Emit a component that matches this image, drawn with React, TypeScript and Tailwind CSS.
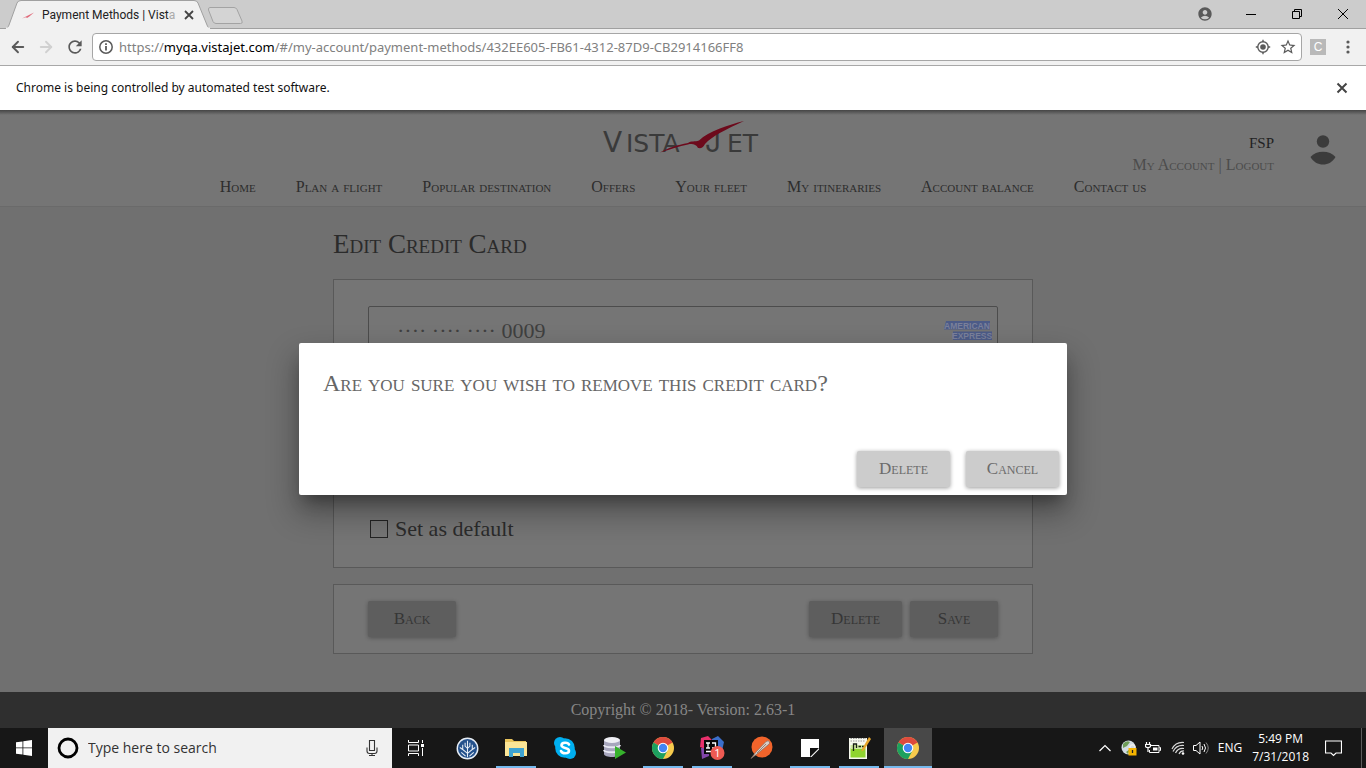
import type { ReactNode } from 'react';
import { ArrowLeft, ArrowRight } from 'lucide-react';
import { MdAccountCircle, MdRefresh, MdStarBorder } from 'react-icons/md';

const navItems = ['Home', 'Plan a flight', 'Popular destination', 'Offers', 'Your fleet', 'My itineraries', 'Account balance', 'Contact us'];

function Swoosh() {
  return (
    <svg viewBox="0 0 16 16" className="h-4 w-4" aria-hidden="true">
      <path d="M2 11.500 L6 9.500 L14 5.500 L9 9.800 L7 11 L6 10.300 Z" fill="#e06a7a" />
    </svg>
  );
}

function TabStrip() {
  return (
    <div className="flex h-[29px] items-start justify-between border-b border-[#a0a0a0] bg-[#cccccc]">
      <div className="flex">
        <div className="relative ml-[5px] h-[29px] w-[206px]">
          <svg viewBox="0 0 206 29" className="absolute inset-0 h-full w-full" aria-hidden="true">
            <path d="M0 29 C3 28 3 27 4 25 L12 3 Q13 .5 16 .5 H189 Q192 .5 193 3 L202 25 C203 28 204 28 206 29 Z" fill="#f1f1f1" stroke="#a0a0a0" />
            <path d="M1 28.500 H205" stroke="#f1f1f1" strokeWidth="2" />
          </svg>
          <div className="relative flex h-full items-center pl-[15px]">
            <Swoosh />
            <span className="ml-1.5 w-[141px] font-['Roboto','Open_Sans',sans-serif] text-[12px] leading-5 whitespace-nowrap text-[#222]">
              Payment Methods | Vist<span className="text-[#aaa]">a</span>
            </span>
            <button type="button" aria-label="Close tab" className="h-3 w-3">
              <svg viewBox="0 0 12 12" className="h-3 w-3"><path d="M2 2 L10 10 M10 2 L2 10" stroke="#444" strokeWidth="1.800" /></svg>
            </button>
          </div>
        </div>
        <button type="button" aria-label="New tab" className="-ml-1 mt-[7px] h-[18px] w-9">
          <svg viewBox="0 0 36 18" className="h-full w-full"><path d="M3 .5 H27 Q29 .5 30 2.500 L35 14 Q36 16.500 33.500 16.500 H9 Q7 16.500 6 14.500 L1.500 3 Q1 .5 3 .5Z" fill="#d4d4d4" stroke="#a3a3a3" /></svg>
        </button>
      </div>
      <div className="flex h-[27px] items-center">
        <button type="button" aria-label="Profile" className="grid w-[46px] place-items-center text-[#5a5a5a]"><MdAccountCircle size={16} /></button>
        <button type="button" aria-label="Minimize" className="grid w-[46px] place-items-center"><svg viewBox="0 0 10 10" className="h-2.5 w-2.5"><path d="M0 5.500 H10" stroke="#000" /></svg></button>
        <button type="button" aria-label="Restore" className="grid w-[46px] place-items-center"><svg viewBox="0 0 10 10" className="h-2.5 w-2.5"><path d="M.5 2.500 H7.500 V9.500 H.5Z M2.500 2.500 V.5 H9.500 V7.500 H7.500" fill="none" stroke="#000" /></svg></button>
        <button type="button" aria-label="Close" className="grid w-[46px] place-items-center"><svg viewBox="0 0 10 10" className="h-2.5 w-2.5"><path d="M0 0 L10 10 M10 0 L0 10" stroke="#000" /></svg></button>
      </div>
    </div>
  );
}

function Toolbar() {
  return (
    <div className="flex h-[37px] items-center border-b border-[#a8a8a8] bg-[#f1f1f1] pr-2.5 pl-[9px] text-[#5a5a5a]">
      <button type="button" aria-label="Back" className="w-7"><ArrowLeft size={18} strokeWidth={2.5} /></button>
      <button type="button" aria-label="Forward" className="w-7 text-[#d0d0d0]"><ArrowRight size={18} strokeWidth={2.5} /></button>
      <button type="button" aria-label="Reload" className="w-[27px]"><MdRefresh size={20} /></button>
      <div className="flex h-7 flex-1 items-center rounded-sm border border-[#a6a6a6] bg-white pr-1 pl-1.5">
        <svg viewBox="0 0 14 14" className="h-3.5 w-3.5" aria-hidden="true"><circle cx="7" cy="7" r="6.200" fill="none" stroke="#5a5a5a" strokeWidth="1.500" /><path d="M7 6 V10.500 M7 3.200 V5" stroke="#5a5a5a" strokeWidth="1.800" /></svg>
        <p className="ml-1.5 flex-1 font-['Noto_Sans','Open_Sans',sans-serif] text-[13px] leading-5 whitespace-nowrap text-[#808080]">
          https://<span className="text-black">myqa.vistajet.com</span>/#/my-account/payment-methods/432EE605-FB61-4312-87D9-CB2914166FF8
        </p>
        <button type="button" aria-label="Location" className="mr-2">
          <svg viewBox="0 0 16 16" className="h-4 w-4"><circle cx="8" cy="8" r="5.200" fill="none" stroke="#5a5a5a" strokeWidth="1.400" /><circle cx="8" cy="8" r="2.800" fill="#5a5a5a" /><path d="M8 .8 V3 M8 13 V15.200 M.8 8 H3 M13 8 H15.200" stroke="#5a5a5a" strokeWidth="1.400" /></svg>
        </button>
        <button type="button" aria-label="Bookmark"><MdStarBorder size={18} /></button>
      </div>
      <button type="button" className="ml-2 grid h-4 w-4 place-items-center bg-[#b9b9b9] font-['Liberation_Sans',sans-serif] text-[12px] leading-4 text-white">C</button>
      <button type="button" aria-label="Menu" className="ml-3.5 w-4">
        <svg viewBox="0 0 16 16" className="h-4 w-4"><g fill="#5a5a5a"><circle cx="8" cy="3" r="1.600" /><circle cx="8" cy="8" r="1.600" /><circle cx="8" cy="13" r="1.600" /></g></svg>
      </button>
    </div>
  );
}

function Logo() {
  return (
    <svg viewBox="0 0 164 44" role="img" aria-label="VistaJet" className="h-11 w-[164px]">
      <g fill="#3a3a3a" fontFamily="DejaVu Sans, sans-serif">
        <text x="2" y="32" fontSize="28">V</text>
        <text x="25" y="32" fontSize="25">ISTA</text>
        <text x="104" y="32" fontSize="28" fontFamily="Inter, sans-serif">J</text>
        <text x="126" y="32" fontSize="25">ET</text>
      </g>
      <path d="M59 32.500 C68 27.500 76 25 87 23 C90 20.500 94 22 98 20.500 C108 11 127 5 143 1 C126 9 111 16 104 24 C102 28 100 28.500 97 28 C95 24 91 23.500 87 24.500 C78 26 69 29.500 59 32.500Z" fill="#6d0a1c" />
    </svg>
  );
}

function SiteHeader() {
  return (
    <header className="border-b border-[#6a6a6a] bg-[#757575] bg-[linear-gradient(#454545,#757575_5px)] [font-variant:small-caps]">
      <div className="grid h-[66px] grid-cols-[1fr_auto_1fr]">
        <span />
        <a href="#home" className="mt-[10px] h-11"><Logo /></a>
        <div className="flex justify-end pt-[22px] pr-[30px]">
          <div className="text-right text-[16px] leading-[22px] text-[#4c4c4c]">
            <p className="text-[15px] font-medium text-[#222]">FSP</p>
            <p><a href="#account">My Account</a> | <a href="#logout">Logout</a></p>
          </div>
          <svg viewBox="0 0 26 30" className="mt-[3px] ml-9 h-[30px] w-[26px]" aria-hidden="true">
            <circle cx="13" cy="6.500" r="6.200" fill="#3b3b3b" />
            <path d="M.5 22 C6 15 20 15 25.500 22 C20 32 6 32 .5 22Z" fill="#3b3b3b" />
          </svg>
        </div>
      </div>
      <nav className="flex justify-center gap-10 pb-2 text-[16px] leading-[22px] text-[#2d2d2d]">
        {navItems.map((item) => <a key={item} href="#nav" className="whitespace-nowrap">{item}</a>)}
      </nav>
    </header>
  );
}

function DimButton({ children, wide }: { children: ReactNode; wide?: boolean }) {
  return (
    <button type="button" className={`${wide ? 'w-[93px]' : 'w-[88px]'} h-9 rounded-xs bg-[#5e5e5e] text-[17px] text-[#363636] shadow-[0_1px_4px_rgba(0,0,0,0.3)] [font-variant:small-caps]`}>
      {children}
    </button>
  );
}

function EditCard() {
  return (
    <main className="flex-1 bg-[#707070]">
      <div className="mx-auto max-w-[700px] pb-[38px]">
        <h1 className="pt-[21px] pb-[19px] text-[27px] leading-8 text-[#2b2b2b] [font-variant:small-caps]">Edit Credit Card</h1>
        <section className="border border-[#595959] bg-[#757575] px-[34px] pt-[26px] pb-6">
          <div className="flex h-[50px] items-center rounded-xs border border-[#4c4c4c] pr-1 pl-7">
            <input aria-label="Card number" readOnly defaultValue="···· ···· ···· 0009" className="min-w-0 flex-1 bg-transparent text-[22px] leading-7 text-[#3f3f3f] outline-none" />
            <svg viewBox="0 0 50 22" role="img" aria-label="American Express" className="h-[22px] w-[50px]">
              <path d="M3 1 H47 V9.500 H1Z M10 11.500 H49 V20 H10Z" fill="#4c5b88" />
              <g fill="#7a809a" fontFamily="Liberation Sans, sans-serif" fontWeight="700" fontSize="8.500">
                <text x="1" y="8.500">AMERICAN</text>
                <text x="9" y="19">EXPRESS</text>
              </g>
            </svg>
          </div>
          <label className="mt-[159px] flex items-center gap-[7px] pl-0.5 text-[22px] leading-7 text-[#2b2b2b]">
            <input type="checkbox" className="h-[18px] w-[18px] appearance-none border border-[#222]" />
            Set as default
          </label>
        </section>
        <section className="mt-4 flex justify-between border border-[#595959] bg-[#757575] px-[34px] py-4">
          <DimButton>Back</DimButton>
          <div className="flex gap-2"><DimButton wide>Delete</DimButton><DimButton>Save</DimButton></div>
        </section>
      </div>
    </main>
  );
}

function ConfirmDialog() {
  const button = 'h-9 w-[93px] rounded-xs bg-[#cccccc] text-[17px] text-[#6b6b6b] shadow-[0_1px_4px_rgba(0,0,0,0.4)] [font-variant:small-caps]';
  return (
    <div className="absolute inset-0 flex items-center justify-center px-4">
      <div role="dialog" aria-modal="true" aria-labelledby="confirm" className="w-full max-w-3xl rounded-xs bg-white px-2 pb-2 shadow-[0_11px_15px_-7px_rgba(0,0,0,0.35),0_16px_30px_3px_rgba(0,0,0,0.3)]">
        <h2 id="confirm" className="px-4 pt-6 text-[24px] leading-8 text-[#666] [font-variant:small-caps]">Are you sure you wish to remove this credit card?</h2>
        <div className="flex justify-end gap-4 pt-[52px]">
          <button type="button" className={button}>Delete</button>
          <button type="button" className={button}>Cancel</button>
        </div>
      </div>
    </div>
  );
}

function ChromeIcon() {
  return (
    <svg viewBox="0 0 24 24" className="h-6 w-6">
      <circle cx="12" cy="12" r="11" fill="#f7cb4d" />
      <path d="M12 12 L2.470 6.500 A11 11 0 0 1 21.530 6.500 Z" fill="#dd4b3e" />
      <path d="M12 12 L2.470 6.500 A11 11 0 0 0 12 23 L16.500 14.500 Z" fill="#1da05f" />
      <path d="M12 6.800 H21.600 L21.530 6.500 L12 5Z" fill="#dd4b3e" />
      <circle cx="12" cy="12" r="5.300" fill="#fff" /><circle cx="12" cy="12" r="4.200" fill="#4285f4" />
    </svg>
  );
}

const apps: { name: string; open?: boolean; active?: boolean; icon: ReactNode }[] = [
  {
    name: 'SourceTree',
    icon: (
      <svg viewBox="0 0 24 24" className="h-[23px] w-[23px]"><circle cx="12" cy="12" r="10.700" fill="#24518c" stroke="#e6edf5" strokeWidth="1.500" /><path d="M12 21 V4 M12 17 L7 13 V8 M12 17 L17 13 V8 M12 12 L9.500 9.500 V6 M12 12 L14.500 9.500 V6 M7 13 L4 11 M17 13 L20 11 M10 20 L5.500 16 M14 20 L18.500 16" fill="none" stroke="#e6edf5" strokeWidth="1.100" /></svg>
    ),
  },
  {
    name: 'File Explorer', open: true,
    icon: (
      <svg viewBox="0 0 24 24" className="h-6 w-6"><path d="M1 3 H8 L10 5 H22 V20 H1Z" fill="#e9c45c" /><path d="M1 6 H23 V20 H1Z" fill="#fbe596" /><path d="M5 12 H20 V21 H16 V17 H9 V21 H5Z" fill="#3fa3d1" /></svg>
    ),
  },
  {
    name: 'Skype',
    icon: (
      <svg viewBox="0 0 24 24" className="h-6 w-6"><circle cx="12" cy="12" r="9.800" fill="#00aff0" /><circle cx="7" cy="7" r="6" fill="#00aff0" /><circle cx="17" cy="17" r="6" fill="#00aff0" /><path d="M16 8.500 C15 6 8.500 6 8.500 9.300 C8.500 12.800 16 11 16 14.700 C16 18 9 18 8 15" fill="none" stroke="#fff" strokeWidth="2.600" strokeLinecap="round" /></svg>
    ),
  },
  {
    name: 'SQL Developer',
    icon: (
      <svg viewBox="0 0 24 24" className="h-6 w-6"><path d="M2 4 V18 C2 22 18 22 18 18 V4Z" fill="#a7a6bd" /><ellipse cx="10" cy="4" rx="8" ry="3" fill="#efeff5" /><path d="M2 9 C2 12 18 12 18 9 M2 14 C2 17 18 17 18 14" fill="none" stroke="#e8e8f2" strokeWidth="1.800" /><path d="M13 10 L24 16.500 L13 23Z" fill="#36b22c" /></svg>
    ),
  },
  { name: 'Chrome', open: true, icon: <ChromeIcon /> },
  {
    name: 'IntelliJ IDEA', open: true,
    icon: (
      <svg viewBox="0 0 26 26" className="h-[26px] w-[26px]"><path d="M2 3 L9 1 L14 6 L9 15 L1 12Z" fill="#e9306c" /><path d="M13 4 L19 1 L25 7 L23 16 L13 14Z" fill="#3b6fcb" /><path d="M2 13 L10 13 L10 21 L3 24Z" fill="#8246a8" /><rect x="5" y="5" width="14" height="14" fill="#080808" /><path d="M7 8 H11 M9 8 V13 M7 13 H11 M13 8 H16.500 V12 Q16.500 13 13 13 M7 16.500 H12" fill="none" stroke="#fff" strokeWidth="1.300" /><circle cx="18.500" cy="18" r="7" fill="#ee5a52" /><text x="18.500" y="22" textAnchor="middle" fontFamily="Open Sans, sans-serif" fontSize="11" fill="#fff">1</text></svg>
    ),
  },
  {
    name: 'Postman',
    icon: (
      <svg viewBox="0 0 24 24" className="h-6 w-6"><circle cx="13" cy="11" r="10.500" fill="#f2642b" /><path d="M2 22.500 L7 16 L17 5.500 Q19.500 4 20.500 6 Q21 8 19 9 L8 18Z" fill="#d8cfc8" stroke="#8a6b5b" strokeWidth=".7" /><path d="M8 17 L17 8" stroke="#8a6b5b" strokeWidth=".8" /></svg>
    ),
  },
  {
    name: 'Sticky Notes', open: true,
    icon: <svg viewBox="0 0 18 18" className="h-[18px] w-[18px]"><path d="M0 0 H18 V18 H0Z" fill="#fff" /><path d="M9 9 H18 L9 18Z" fill="#111" /><path d="M18 10.500 V18 H10.500Z" fill="#171717" /></svg>,
  },
  {
    name: 'Notepad++', open: true,
    icon: (
      <svg viewBox="0 0 24 24" className="h-6 w-6"><path d="M2 2 H20 V23 H2Z" fill="#f6f8ee" /><path d="M3.500 12 H18.500 V21.500 H3.500Z" fill="#8fd32f" /><path d="M3.500 9 H18.500 V13 H3.500Z" fill="#cfe9a0" /><path d="M3.500 2.500 H19 M3.500 5 H18" stroke="#999" strokeWidth="1.200" strokeDasharray="1.500 1" /><path d="M6.500 15 V8 H9.500 V12 M11.500 10.500 H14 M15 10.500 H17.500" fill="none" stroke="#182012" strokeWidth="1.300" /><path d="M22 1 L24 3 L17 14 L14.500 15.500 L15 13Z" fill="#e7a72c" /></svg>
    ),
  },
  { name: 'Chrome window', open: true, active: true, icon: <ChromeIcon /> },
];

function Taskbar() {
  return (
    <footer className="flex h-10 bg-[#171717] font-['Open_Sans','Noto_Sans',sans-serif] text-white">
      <button type="button" aria-label="Start" className="grid w-12 place-items-center">
        <svg viewBox="0 0 16 16" className="h-4 w-4"><path d="M0 2.300 L6.500 1.400 V7.500 H0Z M7.300 1.300 L16 0 V7.500 H7.300Z M0 8.300 H6.500 V14.600 L0 13.700Z M7.300 8.300 H16 V16 L7.300 14.800Z" fill="#fff" /></svg>
      </button>
      <label className="flex w-[344px] items-center bg-[#f1f1f1] px-[9px]">
        <svg viewBox="0 0 22 22" className="h-[22px] w-[22px]" aria-hidden="true"><circle cx="11" cy="11" r="9" fill="none" stroke="#000" strokeWidth="2.800" /></svg>
        <input aria-label="Search" placeholder="Type here to search" className="ml-[9px] min-w-0 flex-1 bg-transparent text-[14px] leading-5 outline-none placeholder:text-[#333]" />
        <svg viewBox="0 0 14 18" className="mr-1 h-[18px] w-3.5" aria-hidden="true"><path d="M4.500 1.500 H9.500 V11.500 H4.500Z M2 8.500 V12 Q2 14.500 4.500 14.500 H9.500 Q12 14.500 12 12 V8.500 M7 14.500 V16.500 M4 16.500 H10" fill="none" stroke="#333" strokeWidth="1.100" /></svg>
      </label>
      <button type="button" aria-label="Task view" className="mr-[3px] grid w-12 place-items-center">
        <svg viewBox="0 0 16 16" className="h-4 w-4"><path d="M.5 0 V2.500 H10.500 V0 M.5 5 H10.500 V11 H.5Z M.5 16 V13.500 H10.500 V16 M14.500 0 V3 M14.500 8 V16" fill="none" stroke="#fff" /><rect x="13" y="4" width="3" height="3" fill="#fff" /></svg>
      </button>
      <div className="flex gap-px">
        {apps.map((app) => (
          <button key={app.name} type="button" aria-label={app.name} className={`relative grid w-12 place-items-center ${app.active ? 'bg-[#484848]' : ''}`}>
            {app.icon}
            {app.open && <span className={`absolute bottom-0 h-0.5 bg-[#76b9ed] ${app.active ? 'inset-x-0' : 'inset-x-1'}`} />}
          </button>
        ))}
      </div>
      <div className="ml-auto flex items-center text-[12px]">
        <svg viewBox="0 0 12 8" className="mr-2.5 h-2 w-3"><path d="M.5 7 L6 1.500 L11.500 7" fill="none" stroke="#fff" strokeWidth="1.200" /></svg>
        <svg viewBox="0 0 16 16" className="mr-2 h-4 w-4"><circle cx="7.500" cy="7.500" r="7" fill="#d2dbe3" /><path d="M2 4 Q5 0 9 2 L6 6 L2 8Z M5 12 L9 9 L7 14Z" fill="#6e9c58" /><path d="M9 8 V6.500 Q11.500 3 14 6.500 V8" fill="none" stroke="#eee" strokeWidth="1.400" /><rect x="7.500" y="8" width="8" height="7.500" fill="#f5b400" /><path d="M11.500 10 V13" stroke="#222" strokeWidth="1.300" /></svg>
        <svg viewBox="0 0 16 14" className="mr-2.5 h-3.5 w-4"><path d="M5.500 4.500 H14 V11.500 H4.500 V9 M14.500 6.500 H15.500 V9.500 H14.500" fill="none" stroke="#fff" /><path d="M8 6.500 H12.500 V9.500 H8Z" fill="#fff" /><path d="M1.500 1 V3 M4.500 1 V3 M.5 3.500 H5.500 V5 Q5.500 6.500 3 6.500 Q.5 6.500 .5 5Z M3 6.500 V11" fill="none" stroke="#fff" strokeWidth="1.200" /></svg>
        <svg viewBox="0 0 14 14" className="mr-2 h-3.5 w-3.5"><path d="M1 8 A12 12 0 0 1 13 1.500 M2 10.500 A11 11 0 0 1 13 4.500 M4.500 12 A8 8 0 0 1 13 7.500 M8 13 A5 5 0 0 1 13 10" fill="none" stroke="#d8d8d8" strokeWidth="1.200" /><circle cx="12" cy="12.500" r="1.300" fill="#fff" /></svg>
        <svg viewBox="0 0 17 14" className="mr-2 h-3.5 w-[17px]"><path d="M.5 4.500 H3 L7 1 V13 L3 9.500 H.5Z M9 5 Q10.500 7 9 9 M11 3 Q14 7 11 11" fill="none" stroke="#fff" /><path d="M13 1.500 Q17.500 7 13 12.500" fill="none" stroke="#888" /></svg>
        <span className="mr-2.5">ENG</span>
        <div className="mr-4 text-center leading-[18px]"><p>5:49 PM</p><p>7/31/2018</p></div>
        <button type="button" aria-label="Notifications" className="mr-[19px]"><svg viewBox="0 0 17 17" className="h-[17px] w-[17px]"><path d="M.5 1 H16.500 V13 H11 L8.500 15.500 L6 13 H.5Z" fill="none" stroke="#fff" strokeWidth="1.200" /></svg></button>
        <span className="mr-1 h-10 w-px bg-[#5c5c5c]" />
      </div>
    </footer>
  );
}

export default function App() {
  return (
    <div className="flex min-h-screen flex-col font-['Liberation_Serif',serif]">
      <TabStrip />
      <Toolbar />
      <div className="flex h-11 items-center justify-between bg-white pr-[18px] pl-4 font-['Noto_Sans','Open_Sans',sans-serif] text-[12px] text-[#111]">
        <p>Chrome is being controlled by automated test software.</p>
        <button type="button" aria-label="Dismiss"><svg viewBox="0 0 12 12" className="h-3 w-3"><path d="M1.500 1.500 L10.500 10.500 M10.500 1.500 L1.500 10.500" stroke="#444" strokeWidth="2" /></svg></button>
      </div>
      <div className="relative flex flex-1 flex-col">
        <SiteHeader />
        <EditCard />
        <div className="flex h-9 items-center justify-center bg-[#2f2f2f] text-[16px] text-[#868686]">Copyright © 2018- Version: 2.63-1</div>
        <ConfirmDialog />
      </div>
      <Taskbar />
    </div>
  );
}
